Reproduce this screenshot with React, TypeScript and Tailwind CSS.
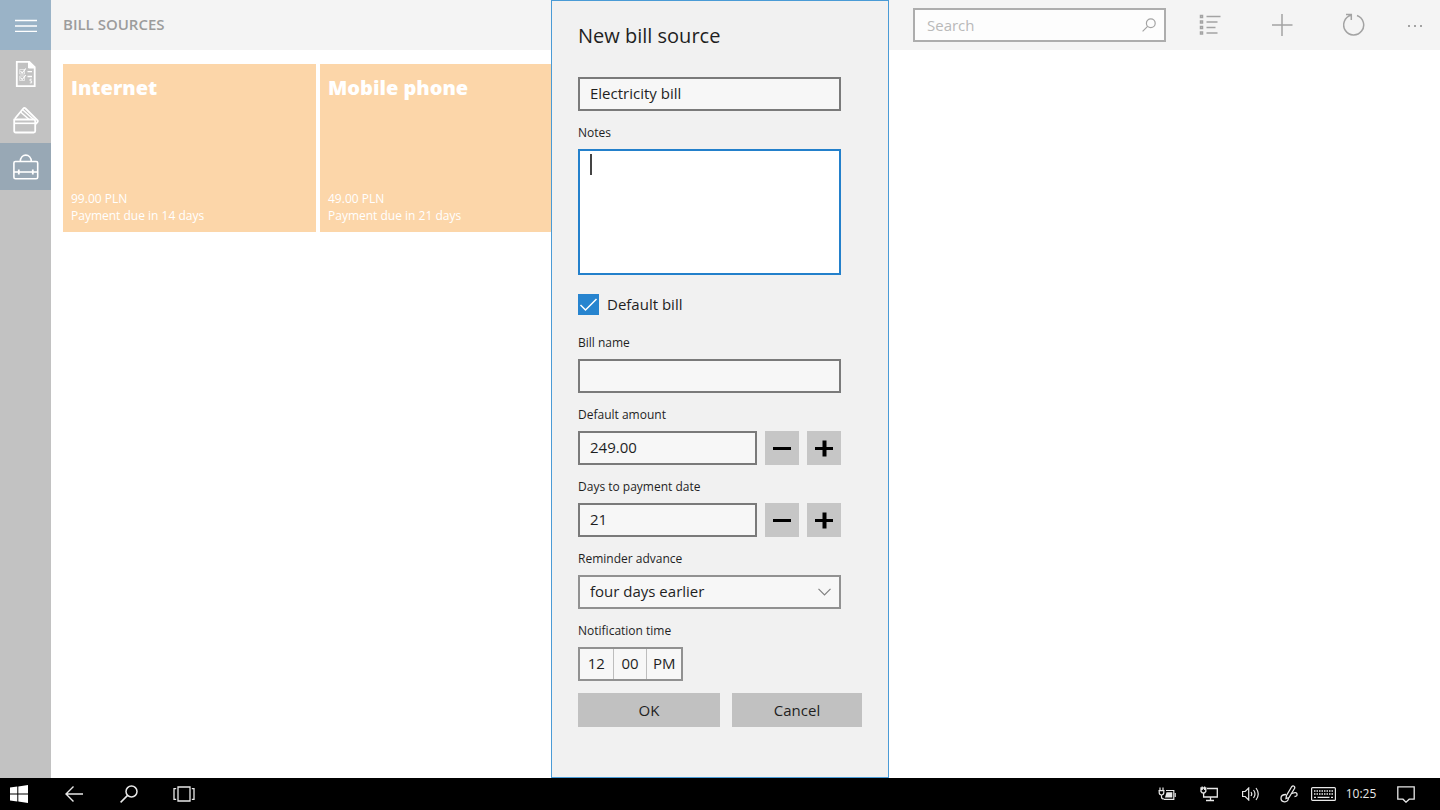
import { useState, ReactNode } from "react";

const bills = [
  { name: "Internet", amount: "99.00 PLN", due: "Payment due in 14 days" },
  { name: "Mobile phone", amount: "49.00 PLN", due: "Payment due in 21 days" },
];

const inputStyle =
  "h-[34px] border-2 border-[#7a7a7a] bg-[#f7f7f7] px-[10px] pb-[2px] text-[15px] text-[#1f1f1f] outline-none";

function Sidebar() {
  return (
    <nav className="flex w-[51px] shrink-0 flex-col bg-[#c2c2c2] text-white">
      <button aria-label="Menu" className="flex h-[50px] items-center justify-center bg-[#9ab3c7]">
        <svg width="22" height="14" viewBox="0 0 22 14" stroke="currentColor" strokeWidth="1.3">
          <path d="M0 2.5h22M0 8h22M0 13.3h22" />
        </svg>
      </button>
      <button aria-label="Bills" className="flex h-[47px] items-center justify-center">
        <svg width="22" height="28" viewBox="0 0 22 28" fill="none" stroke="currentColor">
          <path d="M1.8 1.8h12.5l5.400 5.400v19H1.800z" strokeWidth="1.8" />
          <path d="M13.5 1.5v6.500h6.500z" fill="currentColor" />
          <path d="M4.700 9.500h4.800v4.500H4.700zM4.700 16h4.800v4.500H4.700z" strokeWidth=".6" />
          <path d="M5.500 11l1.700 2 3.600-4.500M5.500 17.500l1.700 2 3.600-4.500" strokeWidth="1.100" />
          <path d="M12.500 11.700h4.500M12.500 16.500h4.500" strokeWidth="1.300" />
          <path d="M16.800 19.200h-1.800v1.700h1.600v2H14.800" strokeWidth=".9" />
        </svg>
      </button>
      <button aria-label="Payments" className="flex h-[46px] items-center justify-center">
        <svg width="26" height="28" viewBox="0 0 26 28" fill="none" stroke="currentColor" strokeWidth="1.8" strokeLinejoin="round">
          <path d="M1.200 13.500h19.500q1.500 0 1.500 1.500v10q0 1.500-1.500 1.500H2.700q-1.500 0-1.500-1.500z" />
          <path d="M1.200 17.300h21" strokeWidth="1.600" />
          <path d="M1.800 12.800L10.300 2.500Q11.300 1.300 12.500 2.500L24.300 14.200Q25.300 15.300 24.300 16.300L22.500 18.200" />
          <path d="M7.600 6l8.500 7.500M9.700 3.800l11 9.700" strokeWidth="1.500" />
        </svg>
      </button>
      <button aria-label="Bill sources" className="flex h-[47px] items-center justify-center bg-[#98a8b5]">
        <svg width="26" height="26" viewBox="0 0 26 26" fill="none" stroke="currentColor" strokeWidth="1.600">
          <rect x=".9" y="7.500" width="23.800" height="17.300" rx="1.500" />
          <path d="M7.300 7.500C7.300 -1 18.300 -1 18.300 7.500" />
          <path d="M1 18h24" />
          <path d="M5.800 15.500v5M19.800 15.500v5" strokeWidth="1.800" />
        </svg>
      </button>
    </nav>
  );
}

function CommandBar() {
  return (
    <header className="flex h-[50px] items-center bg-[#f4f4f4] pl-3 text-[#a3a3a3]">
      <h1 className="flex-1 pb-[2px] text-[15px] font-semibold text-[#9c9c9c]">BILL SOURCES</h1>
      <div className="mr-2 flex h-[34px] w-[253px] items-center border-2 border-[#adadad] bg-[#fdfdfd]">
        <input
          type="text"
          aria-label="Search"
          placeholder="Search"
          className="w-full min-w-0 bg-transparent pl-3 text-[15px] outline-none placeholder:text-[#b9b9b9]"
        />
        <button aria-label="Find" className="pr-2">
          <svg width="14" height="14" viewBox="0 0 14 14" fill="none" stroke="currentColor" strokeWidth="1.2">
            <circle cx="8.8" cy="5.2" r="4.4" />
            <path d="M5.6 8.4L.6 13.4" />
          </svg>
        </button>
      </div>
      <button aria-label="List view" className="flex w-[72px] justify-center">
        <svg width="22" height="22" viewBox="0 0 22 22" fill="none" stroke="currentColor" strokeWidth="1.5">
          <path d="M1.5 1.5h2v2h-2zM1.5 7h2v2h-2zM1.5 12.5h2v2h-2zM1.5 18h2v2h-2z" />
          <path d="M7.5 2.500h14M7.500 8h11M7.500 13.500h9M7.500 19h11" />
        </svg>
      </button>
      <button aria-label="Add" className="flex w-[72px] justify-center">
        <svg width="22" height="22" viewBox="0 0 22 22" stroke="currentColor" strokeWidth="1.5">
          <path d="M11 0v22M1 11h20.5" />
        </svg>
      </button>
      <button aria-label="Refresh" className="flex w-[72px] justify-center">
        <svg width="22" height="24" viewBox="0 0 22 24" fill="none" stroke="currentColor" strokeWidth="1.5">
          <path d="M14 2.500A10 10 0 1 1 8 2.300M3 1.500h5.300V7" />
        </svg>
      </button>
      <button aria-label="More" className="flex w-[50px] justify-center">
        <svg width="16" height="4" viewBox="0 0 16 4" fill="currentColor">
          <path d="M1 2h2v2H1zM7 2h2v2H7zM13 2h2v2h-2z" />
        </svg>
      </button>
    </header>
  );
}

function BillCard({ name, amount, due }: { name: string; amount: string; due: string }) {
  return (
    <article className="flex h-[168px] w-[253px] shrink-0 flex-col justify-between bg-[#fcd6a9] px-2 pt-[10px] pb-2 text-white">
      <h2 className="text-[20px] leading-7 font-extrabold">{name}</h2>
      <div className="text-[12px] leading-[17px]">
        <p>{amount}</p>
        <p>{due}</p>
      </div>
    </article>
  );
}

function Field({ id, label, children }: { id: string; label: string; children: ReactNode }) {
  return (
    <div className="flex flex-col">
      <label htmlFor={id} className="mb-[6px] text-[12px] leading-5">
        {label}
      </label>
      {children}
    </div>
  );
}

function Stepper({ id, value, onChange, onStep }: {
  id: string;
  value: string;
  onChange: (value: string) => void;
  onStep: (step: number) => void;
}) {
  const buttonStyle = "flex size-[34px] shrink-0 items-center justify-center bg-[#c6c6c6] text-black";

  return (
    <div className="flex gap-2">
      <input
        id={id}
        type="text"
        value={value}
        onChange={(e) => onChange(e.target.value)}
        className={`${inputStyle} min-w-0 flex-1`}
      />
      <button type="button" aria-label="Decrease" onClick={() => onStep(-1)} className={buttonStyle}>
        <svg width="18" height="18" viewBox="0 0 18 18" stroke="currentColor" strokeWidth="3">
          <path d="M0 9.5h18" />
        </svg>
      </button>
      <button type="button" aria-label="Increase" onClick={() => onStep(1)} className={buttonStyle}>
        <svg width="18" height="18" viewBox="0 0 18 18" stroke="currentColor">
          <path d="M0 9.5h18" strokeWidth="3" />
          <path d="M9.5 1.5v16" strokeWidth="4" />
        </svg>
      </button>
    </div>
  );
}

function BillSourceDialog() {
  const [name, setName] = useState("Electricity bill");
  const [notes, setNotes] = useState("");
  const [billName, setBillName] = useState("");
  const [amount, setAmount] = useState("249.00");
  const [days, setDays] = useState("21");
  const [isDefault, setIsDefault] = useState(true);

  return (
    <div className="absolute inset-0 flex justify-center">
      <form
        role="dialog"
        aria-label="New bill source"
        onSubmit={(e) => e.preventDefault()}
        className="w-[338px] border border-[#4a9bd6] bg-[#f1f1f1] px-[26px] pt-[21px] text-[#1f1f1f]"
      >
        <h2 className="mb-[27px] text-[20px] leading-7">New bill source</h2>
        <div className="flex w-[263px] flex-col gap-3">
          <input
            type="text"
            aria-label="Name"
            value={name}
            onChange={(e) => setName(e.target.value)}
            className={inputStyle}
          />
          <Field id="notes" label="Notes">
            <div className="relative flex">
              <textarea
                id="notes"
                value={notes}
                onChange={(e) => setNotes(e.target.value)}
                className="h-[126px] w-full resize-none border-2 border-[#2380cb] bg-white px-[10px] py-1 text-[15px] caret-transparent outline-none"
              />
              {notes === "" && <span className="absolute top-[5px] left-3 h-[21px] w-[2px] bg-[#444444]" />}
            </div>
          </Field>
          <label className="relative flex h-[34px] items-center gap-2 text-[15px]">
            <input
              type="checkbox"
              checked={isDefault}
              onChange={(e) => setIsDefault(e.target.checked)}
              className="size-[21px] appearance-none border-2 border-[#7a7a7a] checked:border-[#2784cf] checked:bg-[#2784cf]"
            />
            {isDefault && (
              <svg className="pointer-events-none absolute left-0" width="21" height="21" viewBox="0 0 21 21" fill="none" stroke="white" strokeWidth="1.5">
                <path d="M2.5 11l5 5L18.5 5" />
              </svg>
            )}
            Default bill
          </label>
          <Field id="bill-name" label="Bill name">
            <input
              id="bill-name"
              type="text"
              value={billName}
              onChange={(e) => setBillName(e.target.value)}
              className={inputStyle}
            />
          </Field>
          <Field id="amount" label="Default amount">
            <Stepper
              id="amount"
              value={amount}
              onChange={setAmount}
              onStep={(step) => setAmount((Number(amount) + step).toFixed(2))}
            />
          </Field>
          <Field id="days" label="Days to payment date">
            <Stepper
              id="days"
              value={days}
              onChange={setDays}
              onStep={(step) => setDays(String(Number(days) + step))}
            />
          </Field>
          <Field id="reminder" label="Reminder advance">
            <div className="relative flex items-center">
              <select
                id="reminder"
                defaultValue="4"
                className="h-[34px] w-full appearance-none border-2 border-[#919191] bg-[#f7f7f7] px-[10px] pb-[2px] text-[15px] outline-none"
              >
                <option value="1">one day earlier</option>
                <option value="2">two days earlier</option>
                <option value="3">three days earlier</option>
                <option value="4">four days earlier</option>
              </select>
              <svg className="pointer-events-none absolute right-[10px]" width="13" height="8" viewBox="0 0 13 8" fill="none" stroke="#808080" strokeWidth="1.2">
                <path d="M.5 .8l6 6 6-6" />
              </svg>
            </div>
          </Field>
          <Field id="time" label="Notification time">
            <button
              id="time"
              type="button"
              className="grid h-[34px] w-[105px] grid-cols-3 divide-x divide-[#bdbdbd] border-2 border-[#919191] bg-[#f7f7f7] text-[15px] leading-7"
            >
              <span className="pb-[2px]">12</span>
              <span className="pb-[2px]">00</span>
              <span className="pb-[2px]">PM</span>
            </button>
          </Field>
        </div>
        <div className="mt-3 flex gap-3 text-[15px]">
          <button type="submit" className="h-[34px] w-[142px] bg-[#c1c1c1]">
            OK
          </button>
          <button type="button" className="h-[34px] flex-1 bg-[#c1c1c1]">
            Cancel
          </button>
        </div>
      </form>
    </div>
  );
}

function Taskbar() {
  return (
    <footer className="flex h-8 items-stretch bg-black pr-[10px] text-[#e8e8e8]">
      <button aria-label="Start" className="flex w-[46px] items-center pl-[10px]">
        <svg width="18" height="18" viewBox="0 0 18 18" fill="white">
          <path d="M0 2.6L7.3 1.6V8.5H0zM8.3 1.4L18 0V8.5H8.3zM0 9.5H7.3V16.4L0 15.4zM8.3 9.5H18V18L8.3 16.6z" />
        </svg>
      </button>
      <button aria-label="Back" className="flex w-[55px] items-center justify-center">
        <svg width="18" height="16" viewBox="0 0 18 16" fill="none" stroke="currentColor" strokeWidth="1.4">
          <path d="M18 8H1M8.5 .5L1 8l7.5 7.5" />
        </svg>
      </button>
      <button aria-label="Search Windows" className="flex w-[55px] items-center justify-center">
        <svg width="18" height="18" viewBox="0 0 18 18" fill="none" stroke="currentColor" strokeWidth="1.5">
          <circle cx="11.5" cy="6.5" r="5.5" />
          <path d="M7.6 10.4L.6 17.4" />
        </svg>
      </button>
      <button aria-label="Task view" className="flex w-[55px] items-center justify-center">
        <svg width="22" height="16" viewBox="0 0 22 16" fill="none" stroke="currentColor" strokeWidth="1.3">
          <path d="M5 1h12v14H5zM3.2 2.7H1v10.6h2.2M18.800 2.700H21v10.600h-2.200" />
        </svg>
      </button>
      <span className="flex-1" />
      <button aria-label="Battery" className="flex w-[42px] items-center justify-center">
        <svg width="18" height="14" viewBox="0 0 18 14" fill="none" stroke="currentColor" strokeWidth="1.2">
          <path d="M2 .5v3M5 .5v3M3.5 8v2q0 2 2.500 2M8 3.500h7.800v8.800H6" />
          <path d="M.5 3.600h6M1.200 3.600v2Q1.200 8 3.500 8T5.800 5.600v-2" />
          <path d="M8.500 5.300h5.800v5.200H7Z" fill="currentColor" stroke="none" />
          <path d="M17.200 6v4" />
        </svg>
      </button>
      <button aria-label="Network" className="flex w-[42px] items-center justify-center">
        <svg width="18" height="16" viewBox="0 0 18 16" fill="none" stroke="currentColor" strokeWidth="1.3">
          <path d="M7 2.500h10.300v8.500H3.600V7M10.500 11v3.500M6 14.500h8" />
          <path d="M1 2h4.800v3.500l-1.200 1.300H2.200L1 5.500zM2.200 .5V4M4.600 .5V4" />
        </svg>
      </button>
      <button aria-label="Volume" className="flex w-[42px] items-center justify-center">
        <svg width="18" height="14" viewBox="0 0 18 14" fill="none" stroke="currentColor" strokeWidth="1.2">
          <path d="M.6 4.5h2.6l3.500-3.500v12L3.200 9.500H.6z" />
          <path d="M9 5q1.500 2 0 4M11.500 3q3 4 0 8M14 1q4.500 6 0 12" />
        </svg>
      </button>
      <button aria-label="Pen" className="flex w-[34px] items-center justify-center">
        <svg width="18" height="18" viewBox="0 0 18 18" fill="none" stroke="currentColor" strokeWidth="1.300">
          <path d="M6 13.500L6.500 10.500 11.500 2Q12.800 .4 14 1.200T14.500 3.500L9 12.500z" />
          <path d="M6 9.500Q1.200 9.500 1 13t3.500 3.800Q8 17 8.500 13M12 8.500Q16.500 6.500 17 9t-2.500 2.500" />
        </svg>
      </button>
      <button aria-label="Keyboard" className="flex w-[34px] items-center justify-center">
        <svg width="25" height="14" viewBox="0 0 25 14" fill="none" stroke="currentColor" strokeWidth="1.2">
          <rect x=".6" y=".6" width="23.8" height="12.8" rx="1" />
          <path d="M3 4h19M3 7h19" strokeWidth="1.5" strokeDasharray="1.5 1" />
          <path d="M3 10.3h2M6.5 10.3h12M20 10.3h2" />
        </svg>
      </button>
      <time className="w-[42px] text-center text-[12px] leading-8">10:25</time>
      <button aria-label="Notifications" className="flex w-12 items-center justify-center">
        <svg width="18" height="17" viewBox="0 0 18 17" fill="none" stroke="currentColor" strokeWidth="1.3">
          <path d="M.8 .8h16.4v12.4h-5L9 16.200l-3-3H.8z" />
        </svg>
      </button>
    </footer>
  );
}

function App() {
  return (
    <div className="flex min-h-screen flex-col bg-white font-['Open_Sans','Noto_Sans',sans-serif]">
      <div className="relative flex flex-1">
        <Sidebar />
        <main className="min-w-0 flex-1">
          <CommandBar />
          <section className="flex gap-1 overflow-hidden px-3 pt-[14px]">
            {bills.map((bill) => (
              <BillCard key={bill.name} {...bill} />
            ))}
          </section>
        </main>
        <BillSourceDialog />
      </div>
      <Taskbar />
    </div>
  );
}

export default App;
